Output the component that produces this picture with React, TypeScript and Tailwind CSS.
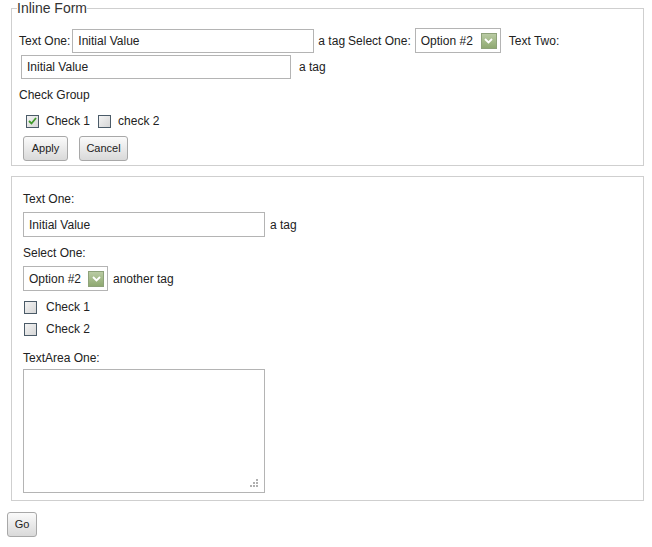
import React from 'react';

function TextInput({ width, height = 24 }: { width: number; height?: number }) {
  return (
    <div
      className="flex items-center border border-[#b4b4b4] bg-white pl-[5px] text-[12px] text-[#222]"
      style={{ width, height }}
    >
      Initial Value
    </div>
  );
}

function Select({ width }: { width: number }) {
  return (
    <div
      className="flex h-[25px] items-center justify-between border border-[#b4b4b4] bg-white pl-[5px] pr-[3px] text-[12px] text-[#222]"
      style={{ width }}
    >
      <span>Option #2</span>
      <span className="flex h-[16px] w-[16px] items-center justify-center border border-[#8ea27a] bg-gradient-to-b from-[#b9cba3] to-[#8fa971]">
        <svg width="9" height="6" viewBox="0 0 9 6">
          <path d="M1 1l3.5 3.5L8 1" stroke="#fff" strokeWidth="1.8" fill="none" />
        </svg>
      </span>
    </div>
  );
}

function Check({ checked = false, label, gap = 7 }: { checked?: boolean; label: string; gap?: number }) {
  return (
    <div className="flex items-center" style={{ gap }}>
      <span className="flex h-[13px] w-[13px] items-center justify-center border border-[#4b5b68] bg-gradient-to-br from-[#f4f4f4] to-[#d6d6d6]">
        {checked && (
          <svg width="9" height="8" viewBox="0 0 9 8">
            <path d="M1 4l2.5 2.5L8 1" stroke="#3f9a2a" strokeWidth="1.8" fill="none" />
          </svg>
        )}
      </span>
      <span>{label}</span>
    </div>
  );
}

function Button({ children, width }: { children: React.ReactNode; width: number }) {
  return (
    <button
      className="flex h-[25px] items-center justify-center rounded-[3px] border border-[#a8a8a8] bg-gradient-to-b from-[#fbfbfb] to-[#d9d9d9] text-[11px] text-[#222]"
      style={{ width }}
    >
      {children}
    </button>
  );
}

export default function App() {
  return (
    <div className="h-[547px] w-[652px] bg-white font-['Liberation_Sans',Arial,sans-serif] text-[12px] text-[#222]">
      <fieldset className="ml-[11px] h-[166px] w-[633px] border border-[#cfcfcf] px-[7px]">
        <legend className="ml-[-2px] px-0 text-[14px] leading-[16px] text-[#333]">Inline Form</legend>

        <div className="mt-[12px] flex h-[25px] items-center">
          <span>Text One:</span>
          <div className="ml-[2px]">
            <TextInput width={242} />
          </div>
          <span className="ml-[4px]">a tag</span>
          <span className="ml-[3px]">Select One:</span>
          <div className="ml-[4px]">
            <Select width={86} />
          </div>
          <span className="ml-[8px]">Text Two:</span>
        </div>

        <div className="mt-[1px] flex h-[25px] items-center pl-[2px]">
          <TextInput width={270} />
          <span className="ml-[8px]">a tag</span>
        </div>

        <div className="mt-[9px] leading-[14px]">Check Group</div>

        <div className="mt-[10px] flex items-center gap-[8px] pl-[7px]">
          <Check checked label="Check 1" />
          <Check label="check 2" />
        </div>

        <div className="mt-[6px] flex gap-[11px] pl-[4px]">
          <Button width={45}>Apply</Button>
          <Button width={49}>Cancel</Button>
        </div>
      </fieldset>

      <div className="ml-[11px] mt-[10px] h-[325px] w-[633px] border border-[#cfcfcf] pl-[11px]">
        <div className="mt-[15px] leading-[14px]">Text One:</div>
        <div className="mt-[6px] flex items-center">
          <TextInput width={242} height={25} />
          <span className="ml-[5px]">a tag</span>
        </div>

        <div className="mt-[9px] leading-[14px]">Select One:</div>
        <div className="mt-[6px] flex items-center">
          <Select width={85} />
          <span className="ml-[5px]">another tag</span>
        </div>

        <div className="mt-[7px] flex flex-col gap-[4px] pl-[1px]">
          <Check label="Check 1" gap={9} />
          <Check label="Check 2" gap={9} />
        </div>

        <div className="mt-[13px] leading-[14px]">TextArea One:</div>
        <div className="relative mt-[4px] h-[124px] w-[242px] border border-[#b4b4b4] bg-white">
          <svg className="absolute bottom-[5px] right-[6px]" width="9" height="9" viewBox="0 0 9 9">
            <rect x="7" y="1" width="2" height="2" fill="#b0b0b0" />
            <rect x="4" y="4" width="2" height="2" fill="#b0b0b0" />
            <rect x="7" y="4" width="2" height="2" fill="#b0b0b0" />
            <rect x="1" y="7" width="2" height="2" fill="#b0b0b0" />
            <rect x="4" y="7" width="2" height="2" fill="#b0b0b0" />
            <rect x="7" y="7" width="2" height="2" fill="#b0b0b0" />
          </svg>
        </div>
      </div>

      <div className="ml-[7px] mt-[11px]">
        <Button width={30}>Go</Button>
      </div>
    </div>
  );
}
